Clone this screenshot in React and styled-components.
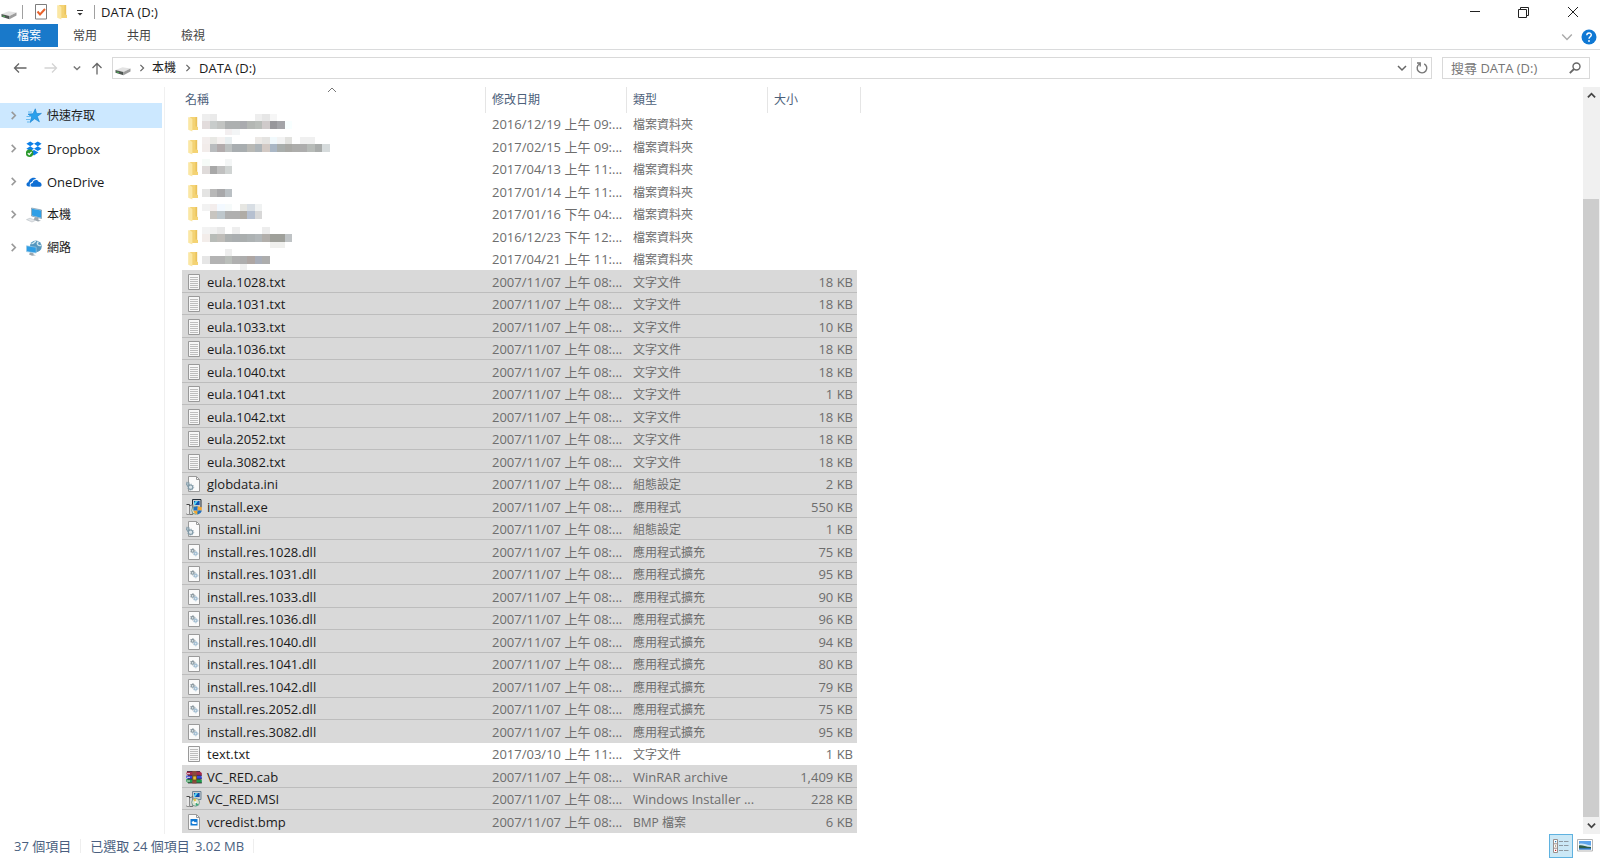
import React from "react";
import styled, { createGlobalStyle, css } from "styled-components";

const GlobalStyle = createGlobalStyle`
  * {
    box-sizing: border-box;
  }
  body {
    margin: 0;
    background: #fff;
    color: #1b1b1b;
    font-family: "Open Sans", "Noto Sans CJK TC", sans-serif;
    font-size: 13px;
    line-height: 20px;
  }
  button, input {
    font: inherit;
    color: inherit;
    background: none;
    border: 0;
    padding: 0;
    margin: 0;
  }
  svg {
    display: block;
    flex: none;
  }
`;

/*
  Window
    TitleBar
    Ribbon
    AddressRow
    Body
      Sidebar
      Files
      ScrollBar
    StatusBar
*/
const Window = styled.div`
  display: flex;
  flex-direction: column;
  min-height: 100vh;
`;

const TitleBar = styled.header`
  display: flex;
  align-items: center;
  height: 24px;
  padding: 0 3px 0 1px;
`;

const QuickButton = styled.button`
  display: flex;
  align-items: center;
  justify-content: center;
  width: ${(p) => p.$width || 20}px;
  height: 24px;
`;

const Separator = styled.span`
  width: 1px;
  height: ${(p) => p.$height || 14}px;
  margin: 0 ${(p) => p.$gap || 6}px;
  background: ${(p) => p.$color || "#a0a0a0"};
`;

const Title = styled.h1`
  margin: 0;
  font-size: 13px;
  font-weight: 400;
  flex: 1;
`;

const CaptionButton = styled.button`
  display: flex;
  align-items: center;
  justify-content: center;
  width: 49px;
  height: 24px;
`;

const Ribbon = styled.div`
  display: flex;
  align-items: flex-start;
  height: 26px;
  border-bottom: 1px solid #dadbdc;
`;

const Tab = styled.button`
  width: 54px;
  height: 24px;
  font-size: 12px;
  color: #444;
  ${(p) =>
    p.$file &&
    css`
      width: 58px;
      height: 23px;
      color: #fff;
      background: #1979ca;
    `}
`;

const RibbonTools = styled.div`
  display: flex;
  align-items: center;
  gap: 8px;
  height: 25px;
  margin-left: auto;
  padding-right: 3px;
`;

const AddressRow = styled.div`
  display: flex;
  align-items: center;
  gap: 3px;
  height: 37px;
  padding: 0 10px 1px 10px;
`;

const NavButton = styled.button`
  display: flex;
  align-items: center;
  justify-content: center;
  width: ${(p) => p.$width || 20}px;
  height: 22px;
`;

const AddressBox = styled.nav`
  display: flex;
  align-items: center;
  flex: 1;
  height: 22px;
  padding-left: 2px;
  border: 1px solid #d9d9d9;
`;

const Crumb = styled.button`
  height: 20px;
  line-height: 18px;
  font-size: ${(p) => (p.$cjk ? 12 : 13)}px;
`;

const Spacer = styled.span`
  flex: 1;
`;

const RefreshButton = styled(NavButton)`
  height: 20px;
  border-left: 1px solid #d9d9d9;
`;

const SearchBox = styled.label`
  display: flex;
  align-items: center;
  width: 148px;
  height: 22px;
  margin-left: 7px;
  padding: 0 8px;
  border: 1px solid #d9d9d9;
`;

const SearchInput = styled.input`
  flex: 1;
  min-width: 0;
  outline: 0;
  &::placeholder {
    color: #767676;
    opacity: 1;
  }
`;

const Body = styled.div`
  display: flex;
  flex: 1;
`;

const Sidebar = styled.nav`
  display: flex;
  flex-direction: column;
  gap: 8px;
  width: 165px;
  padding: 16px 2px 0 0;
  border-right: 1px solid #f0f0f0;
`;

const SideItem = styled.button`
  display: flex;
  align-items: center;
  height: 25px;
  padding-left: 9px;
  font-size: ${(p) => (p.$cjk ? 12 : 13)}px;
  background: ${(p) => (p.$active ? "#cce8ff" : "transparent")};
`;

const SideIcon = styled.span`
  margin: 0 5px 0 8px;
`;

const Files = styled.main`
  flex: 1;
  padding-left: 17px;
`;

const Table = styled.table`
  width: 679px;
  table-layout: fixed;
  border-collapse: separate;
  border-spacing: 0;
`;

const HeadCell = styled.th`
  position: relative;
  width: ${(p) => p.$width}px;
  height: 26px;
  padding: 0 0 0 ${(p) => (p.$first ? 3 : 6)}px;
  border-right: 1px solid #e5e5e5;
  font-size: 12px;
  font-weight: 400;
  color: #4c607a;
  text-align: left;
`;

const SortMark = styled.span`
  position: absolute;
  top: 0;
  left: 145px;
`;

const Cell = styled.td`
  height: inherit;
  padding: ${(p) => (p.$cjk ? 2 : 0)}px 0 0 6px;
  color: #6d6d6d;
  font-size: ${(p) => (p.$cjk ? 12 : 13)}px;
  line-height: 20px;
  white-space: nowrap;
  overflow: hidden;
`;

const NameCell = styled(Cell)`
  padding-left: 4px;
  color: #1b1b1b;
`;

const SizeCell = styled(Cell)`
  padding-right: 4px;
  border-right: 4px solid transparent;
  background-clip: padding-box;
  text-align: right;
`;

const Row = styled.tr`
  height: 22px;
  &:nth-child(even) {
    height: 23px;
  }
  ${(p) =>
    p.$selected &&
    css`
      ${Cell} {
        background-color: #d9d9d9;
        box-shadow: ${p.$last ? "none" : "inset 0 -1px #bdbdbd"};
      }
    `}
`;

const NameInner = styled.div`
  display: flex;
  align-items: center;
  gap: ${(p) => p.$gap || 5}px;
  height: 20px;
`;

const MosaicSvg = styled.svg`
  margin-top: 2px;
`;

const ScrollBar = styled.div`
  display: flex;
  flex-direction: column;
  width: 17px;
  background: #f0f0f0;
`;

const ScrollButton = styled.button`
  display: flex;
  align-items: center;
  justify-content: center;
  height: 17px;
`;

const ScrollGap = styled.div`
  flex: 95;
`;

const ScrollThumb = styled.div`
  flex: 617;
  margin-right: 1px;
  background: #cdcdcd;
`;

const StatusBar = styled.footer`
  display: flex;
  align-items: center;
  height: 24px;
  padding-left: 14px;
  font-size: 13px;
  color: #4a5f80;
`;

const StatusText = styled.span`
  margin-right: ${(p) => p.$gap || 0}px;
`;

const ViewButtons = styled.div`
  display: flex;
  margin-left: auto;
  padding-right: 3px;
`;

const ViewButton = styled.button`
  display: flex;
  align-items: center;
  justify-content: center;
  width: 24px;
  height: 24px;
  border: 1px solid ${(p) => (p.$active ? "#5fb2e0" : "transparent")};
  background: ${(p) => (p.$active ? "#cbe8f6" : "transparent")};
`;

const Svg = ({ w = 16, h = 16, children }) => (
  <svg width={w} height={h} viewBox={`0 0 ${w} ${h}`} fill="none" aria-hidden="true">
    {children}
  </svg>
);

const Chevron = ({ dir = "right", color = "#666", size = 10, width = 1.5 }) => {
  const paths = {
    right: "M3 1 L7 5 L3 9",
    down: "M1 3 L5 7 L9 3",
    up: "M1 7 L5 3 L9 7",
  };
  return (
    <svg width={size} height={size} viewBox="0 0 10 10" fill="none" aria-hidden="true">
      <path d={paths[dir]} stroke={color} strokeWidth={width} />
    </svg>
  );
};

const DriveIcon = () => (
  <Svg>
    <path d="M0.5 10 L7.5 7.2 L15.5 8.6 L8.5 12 Z" fill="#e3e3e3" />
    <path d="M0.5 10 L8.5 12 V15.2 L0.5 12.8 Z" fill="#505753" />
    <path d="M8.5 12 L15.5 8.6 V11.6 L8.5 15.2 Z" fill="#9c9c9c" />
    <path d="M1.5 11.4 L4 12.1 V13.2 L1.5 12.5 Z" fill="#4fae57" />
  </Svg>
);

const CheckDocIcon = () => (
  <Svg>
    <path d="M2.5 0.5 H13.5 V15 H2.5 Z" fill="#fff" stroke="#7d7d7d" />
    <path d="M4.5 7.5 L7 10.5 L12 5" stroke="#e8622c" strokeWidth="2" />
  </Svg>
);

const FolderIcon = ({ w = 16 }) => (
  <svg width={w} height="16" viewBox={`0 0 ${w} 16`} aria-hidden="true">
    <path d="M4 1 H11 V10.5 L12 11 V14 H5 Z" fill="#f4d374" />
    <path d="M9.5 1 H11.2 V10.5 H9.5 Z" fill="#eac25b" />
    <path d="M2.2 1.2 H4 L6.4 3 V15.5 L2.2 13.8 Z" fill="#fbe7a3" />
  </svg>
);

const StarIcon = () => (
  <Svg>
    <path
      d="M9.3 0.8 L10.6 5.6 L15.4 5.4 L11.3 8.5 L13.4 13.8 L8.6 10.8 L4 14.5 L5.6 9.1 L2 6.1 L7 5.7 Z"
      fill="#2aa0ec"
      stroke="#1580cf"
      strokeWidth="0.6"
    />
    <path d="M2 4 H6 M0.5 8.5 H4 M0 11.5 H4 M1 14 H3.5" stroke="#67b9ee" />
  </Svg>
);

const DropboxIcon = () => (
  <Svg>
    <path
      d="M4.2 0.4 L8 2.8 L4.2 5.2 L0.4 2.8 Z M11.8 0.4 L15.6 2.8 L11.8 5.2 L8 2.8 Z M4.2 5.3 L8 7.7 L4.2 10.1 L0.4 7.7 Z M11.8 5.3 L15.6 7.7 L11.8 10.1 L8 7.7 Z M8 9 L12.4 11.6 L8 14.4 L3.6 11.6 Z"
      fill="#0b7fe8"
    />
    <circle cx="3.6" cy="12.2" r="3.7" fill="#2c9a2e" />
    <path d="M1.8 12.2 L3.2 13.6 L5.6 10.8" stroke="#fff" strokeWidth="1.2" />
  </Svg>
);

const OneDriveIcon = () => (
  <Svg>
    <path
      d="M2.6 12.6 C-0.4 12.4 0 8.7 2.4 8.3 C2.8 4.8 7.6 1.8 10.4 5 C8.4 4.9 6.5 6 6 8 C4 8.1 3 10.8 4.4 12.6 Z"
      fill="#0f6fd4"
    />
    <path
      d="M6.3 12.8 C3.6 12.7 4.1 9 6.7 9 C7 5.6 11.8 5 12.7 8 C15.6 7.5 16.8 12.4 14 12.8 Z"
      fill="#0f6fd4"
    />
  </Svg>
);

const ComputerIcon = () => (
  <Svg>
    <path d="M5.5 1 L15.5 3 V11.5 L5.5 9 Z" fill="#d5e1ea" stroke="#7090a8" strokeWidth="0.7" />
    <path d="M6 1.8 L15 3.6 V10.8 L6 8.6 Z" fill="#2f9fe6" />
    <path d="M9 10 L12.5 11 V13 L15 13.8 L12 14.5 L7.5 12.8 Z" fill="#9ba6ae" />
    <path d="M0.5 12.6 L4 11.2 L9.5 13.4 L6 15 Z" fill="#e3e6e9" stroke="#b8bfc4" strokeWidth="0.6" />
  </Svg>
);

const NetworkIcon = () => (
  <Svg>
    <circle cx="9.8" cy="6.4" r="5.9" fill="#5596be" />
    <path d="M5.5 3.6 C8 4 8 1.5 10 1.2 M12.5 1.6 C10 4 12 6 15 5.5" stroke="#cfe6ee" strokeWidth="1.4" />
    <path d="M0.5 5.8 L10.2 7.2 V13 L0.5 11.6 Z" fill="#2e9de4" stroke="#9cc8e4" strokeWidth="0.7" />
    <path d="M4 12.6 L7.5 13.2 V14.6 L10 15.2 L6 15.8 L3 14.4 Z" fill="#9ba6ae" />
  </Svg>
);

const Page = () => (
  <path d="M2.5 0.5 H10.5 L13.5 3.5 V15.5 H2.5 Z" fill="#fafafa" stroke="#9a9a9a" />
);

const TextIcon = () => (
  <Svg>
    <path d="M2.5 0.5 H13.5 V15.5 H2.5 Z" fill="#f7f7f7" stroke="#999" />
    <path d="M4 3.5 H12 M4 5.5 H12 M4 7.5 H12 M4 9.5 H12 M4 11.5 H12 M4 13.5 H12" stroke="#bdbdbd" />
  </Svg>
);

const Cog = ({ x, y, r, color = "#7f98a6" }) => (
  <g stroke={color}>
    <circle cx={x} cy={y} r={r} fill="#dbe5ea" strokeWidth="1.1" />
    <circle cx={x} cy={y} r={r + 0.9} strokeWidth="0.8" strokeDasharray="1.1 1.3" />
  </g>
);

const IniIcon = () => (
  <Svg>
    <Page />
    <path d="M10.5 0.5 V3.5 H13.5" stroke="#9a9a9a" />
    <Cog x={1.8} y={8} r={1.2} />
    <Cog x={4.6} y={11.2} r={2.2} />
  </Svg>
);

const DllIcon = () => (
  <Svg>
    <path d="M2.5 0.5 H13.5 V15.5 H2.5 Z" fill="#fafafa" stroke="#9a9a9a" />
    <Cog x={6.6} y={6.8} r={1.4} color="#8a979e" />
    <Cog x={9.6} y={9.6} r={1.4} color="#9dbad0" />
  </Svg>
);

const InstallerIcon = ({ shield }) => (
  <Svg>
    <path d="M6.5 0.5 H15 V8.5 H6.5 Z" fill="#c8ccd0" stroke={shield ? "#26303a" : "#6f8596"} />
    <path d="M8 2 H13.6 V6 H8 Z" fill="#0c50b0" />
    <path d="M9.5 2 H12 L9 6 H8 V4 Z" fill="#57d3ef" />
    <path d="M0.5 5.5 H3.5 V15 H0.5" stroke="#444" />
    <path d="M1 6 H3 V15 H1 Z" fill="#e8e8e8" />
    <path d="M3.5 7 L6.8 5.5 V15.5 H3.5" fill="#d4d4d4" stroke="#555" strokeWidth="0.8" />
    <circle cx="9.6" cy="11.3" r="3.9" fill="#dfe3d0" stroke="#5f8f85" strokeWidth="0.8" />
    <path d="M9.6 11.3 L7 8.5 L10 7.4 Z" fill="#e4c03e" />
    <path d="M9.6 11.3 L12.6 13.8 L9.8 15.1 Z" fill="#37a878" />
    <circle cx="9.6" cy="11.3" r="1" fill="#fff" />
    {shield && (
      <g>
        <path d="M11.5 7.2 L15.8 8.2 V11.6 H11.5 Z M11.5 11.6 V15.8 C9.2 14.8 7.6 13.4 7.4 11.6 Z" fill="#f2a632" />
        <path d="M11.5 7.2 L7.4 8.2 V11.6 H11.5 Z M11.5 11.6 V15.8 C14 14.8 15.6 13.4 15.8 11.6 Z" fill="#1f6fc0" />
      </g>
    )}
  </Svg>
);

const ArchiveIcon = () => (
  <Svg>
    <path d="M1 2.5 H14 L15.8 4 V6.5 H2 L0.3 5 Z" fill="#a62a4c" />
    <path d="M0.3 6.5 H14 L15.8 7.5 V10 H2 L0.3 9 Z" fill="#3546d8" />
    <path d="M0.3 10 H14 L15.8 11 V14 H2 L0.3 12.5 Z" fill="#1f9a4c" />
    <path d="M1 2.5 H14 M2 6.4 H15.8 M2 10 H15.8 M2 14 H15.8" stroke="#3a1c30" strokeWidth="0.8" />
    <path d="M1 4.7 H4 M1 8.3 H4 M1 12 H4" stroke="#e9d9dd" />
    <path d="M6.3 2 H10.5 V14.4 H6.3 Z" fill="#8a4a3c" />
    <path d="M6.8 7 H10.4 V11 H6.8 Z" fill="#e6c13a" stroke="#5c4518" strokeWidth="0.7" />
  </Svg>
);

const BitmapIcon = () => (
  <Svg>
    <Page />
    <path d="M10.5 0.5 V3.5 H13.5" stroke="#9a9a9a" />
    <path d="M4.5 5 H11.5 V11.5 H4.5 Z" fill="#0f78d4" />
    <path d="M5.5 8 L7.5 7 L9 8.6 L10 7.8 L10.6 8.6 V10 H6.5 Z" fill="#fff" />
  </Svg>
);

const DetailsViewIcon = () => (
  <Svg>
    <path d="M0.5 1.5 H4.5 V14.5 H0.5 Z M0.5 5.8 H4.5 M0.5 10.2 H4.5" fill="#fff" stroke="#9a8f8c" />
    <path d="M2 3 H3.2 V4.2 H2 Z" fill="#2980b9" />
    <path d="M2 7.4 H3.2 V8.6 H2 Z" fill="#7a5a2a" />
    <path d="M2 11.7 H3.2 V12.9 H2 Z" fill="#d02020" />
    <path d="M6 3.5 H10 M11 3.5 H15.5 M6 7.5 H10 M11 7.5 H15.5 M6 12.5 H10 M11 12.5 H15.5" stroke="#8f9aa2" />
  </Svg>
);

const ThumbViewIcon = () => (
  <Svg>
    <path d="M0.5 1.5 H15.5 V13 H0.5 Z" fill="#fff" stroke="#b5b5b5" />
    <path d="M2 3 H14 V11.5 H2 Z" fill="#5ea5ec" />
    <path d="M2 6 C6 4.5 9 7 14 7.5 V9 H2 Z" fill="#cfe6f4" />
    <path d="M2 7.5 C5 6.5 8 9 14 9 V10 H2 Z" fill="#2e5d45" />
    <path d="M2 10 H14 V11.5 H2 Z" fill="#3478b8" />
  </Svg>
);

const icons = {
  folder: <FolderIcon w={12} />,
  txt: <TextIcon />,
  ini: <IniIcon />,
  exe: <InstallerIcon shield />,
  dll: <DllIcon />,
  cab: <ArchiveIcon />,
  msi: <InstallerIcon />,
  bmp: <BitmapIcon />,
};

// pixelated folder names: three lines of cells, "-" is an empty cell
const mosaics = [
  [
    "eeeeee eaeaea - - - - - eeeeee e6e6e6 f6f6f6",
    "e2dcdc c8cccb c2c4c2 adb0b0 adb0b0 aaabaf b4b7b4 b9bdb9 cfcaca 97979b a3a4a8 f8ffff",
    "- - - f3eff0 f3f5f6",
  ],
  [
    "f3eeed e8e8e4 f5f1f0 e8eef0 - - - ece9e6 e4e3e1 f1f9fc f3f3f3 e2e2df - f0f0f0 f0f0f0",
    "f2ecea b9bcbe b2abac bcc0c0 a8adb0 a8adaf b9b9b5 adb4b8 d2c9c4 aab7c5 a9aeac a9a9a5 adadab adadad b7bbb8 a9acab d6dbdc",
    "",
  ],
  ["f6fbf8 - - f4f6f6", "dfdbda a8a8a8 c0c0c0 d0d4d3", ""],
  ["", "e4e4e3 b8b8b8 a8a8aa bac0c4", ""],
  [
    "f2f2f2 f3edec f3f9ff f6fafa - e6e6e2 d8dee4 f0f2f2",
    "- c8c5c0 bec7cc b0b0b0 b0b0b0 b0aca6 b6c0d0 d8d8d8",
    "",
  ],
  [
    "f3f3f3 f0f0f0 e8e8e8 - eeeeee - - - ededed",
    "f3edea b8bcb8 bfbdb9 adb1b1 aaaeb0 aaaeae adb2b3 b2b7b9 b2afab 9fa09a 9fa09a bfc3c5",
    "- - - - - - - - - f0f0ee f0f0ee",
  ],
  [
    "- - - eeeeee",
    "e6e6e6 b3b3b3 b3b3b3 babeba b0b0b0 adadad aea6a3 a8adb8 adadad",
    "- - - - - f0f0f0",
  ],
];

const Mosaic = ({ lines }) => (
  <MosaicSvg width="128" height="22" viewBox="0 0 17 3" preserveAspectRatio="none" shapeRendering="crispEdges" role="img" aria-label="Folder">
    {lines.map((line, y) =>
      line
        .split(" ")
        .map((c, x) =>
          c && c !== "-" ? <rect key={`${x}-${y}`} x={x} y={y} width="1" height="1" fill={`#${c}`} /> : null
        )
    )}
  </MosaicSvg>
);

const folderDates = [
  "2016/12/19 上午 09:...",
  "2017/02/15 上午 09:...",
  "2017/04/13 上午 11:...",
  "2017/01/14 上午 11:...",
  "2017/01/16 下午 04:...",
  "2016/12/23 下午 12:...",
  "2017/04/21 上午 11:...",
];

const types = {
  txt: "文字文件",
  ini: "組態設定",
  exe: "應用程式",
  dll: "應用程式擴充",
  cab: "WinRAR archive",
  msi: "Windows Installer ...",
  bmp: "BMP 檔案",
};

const files = [
  ["eula.1028.txt", "18 KB"],
  ["eula.1031.txt", "18 KB"],
  ["eula.1033.txt", "10 KB"],
  ["eula.1036.txt", "18 KB"],
  ["eula.1040.txt", "18 KB"],
  ["eula.1041.txt", "1 KB"],
  ["eula.1042.txt", "18 KB"],
  ["eula.2052.txt", "18 KB"],
  ["eula.3082.txt", "18 KB"],
  ["globdata.ini", "2 KB"],
  ["install.exe", "550 KB"],
  ["install.ini", "1 KB"],
  ["install.res.1028.dll", "75 KB"],
  ["install.res.1031.dll", "95 KB"],
  ["install.res.1033.dll", "90 KB"],
  ["install.res.1036.dll", "96 KB"],
  ["install.res.1040.dll", "94 KB"],
  ["install.res.1041.dll", "80 KB"],
  ["install.res.1042.dll", "79 KB"],
  ["install.res.2052.dll", "75 KB"],
  ["install.res.3082.dll", "95 KB"],
  ["text.txt", "1 KB"],
  ["VC_RED.cab", "1,409 KB"],
  ["VC_RED.MSI", "228 KB"],
  ["vcredist.bmp", "6 KB"],
];

const places = [
  { name: "快速存取", icon: <StarIcon />, cjk: true, active: true },
  { name: "Dropbox", icon: <DropboxIcon /> },
  { name: "OneDrive", icon: <OneDriveIcon /> },
  { name: "本機", icon: <ComputerIcon />, cjk: true },
  { name: "網路", icon: <NetworkIcon />, cjk: true },
];

const FileTable = () => (
  <Table>
    <thead>
      <tr>
        <HeadCell $width={304} $first aria-sort="ascending">
          名稱
          <SortMark>
            <Svg w={10} h={6}>
              <path d="M1 5 L5 1 L9 5" stroke="#777" />
            </Svg>
          </SortMark>
        </HeadCell>
        <HeadCell $width={141}>修改日期</HeadCell>
        <HeadCell $width={141}>類型</HeadCell>
        <HeadCell $width={93}>大小</HeadCell>
      </tr>
    </thead>
    <tbody>
      {folderDates.map((date, i) => (
        <Row key={date}>
          <NameCell>
            <NameInner $gap={4}>
              {icons.folder}
              <Mosaic lines={mosaics[i]} />
            </NameInner>
          </NameCell>
          <Cell>{date}</Cell>
          <Cell $cjk>檔案資料夾</Cell>
          <SizeCell />
        </Row>
      ))}
      {files.map(([name, size]) => {
        const ext = name.split(".").pop().toLowerCase();
        const selected = name !== "text.txt";
        const last = name === "install.res.3082.dll" || name === "vcredist.bmp";
        return (
          <Row key={name} $selected={selected} $last={last} aria-selected={selected}>
            <NameCell>
              <NameInner>
                {icons[ext]}
                {name}
              </NameInner>
            </NameCell>
            <Cell>{selected ? "2007/11/07 上午 08:..." : "2017/03/10 上午 11:..."}</Cell>
            <Cell $cjk={ext !== "cab" && ext !== "msi"}>{types[ext]}</Cell>
            <SizeCell>{size}</SizeCell>
          </Row>
        );
      })}
    </tbody>
  </Table>
);

const App = () => {
  return (
    <Window>
      <GlobalStyle />
      <TitleBar>
        <DriveIcon />
        <Separator $gap={5} />
        <QuickButton aria-label="Properties" $width={26}>
          <CheckDocIcon />
        </QuickButton>
        <QuickButton aria-label="New folder" $width={18}>
          <FolderIcon />
        </QuickButton>
        <QuickButton aria-label="Customize toolbar" $width={16}>
          <Svg w={8} h={8}>
            <path d="M1 2.5 H7" stroke="#333" />
            <path d="M1.5 5 H6.5 L4 7.5 Z" fill="#333" />
          </Svg>
        </QuickButton>
        <Separator />
        <Title>DATA (D:)</Title>
        <CaptionButton aria-label="Minimize">
          <Svg w={10} h={10}>
            <path d="M0 4.5 H10" stroke="#222" />
          </Svg>
        </CaptionButton>
        <CaptionButton aria-label="Restore">
          <Svg w={11} h={11}>
            <path d="M0.5 2.5 H8.5 V10.5 H0.5 Z M2.5 2.5 V0.5 H10.5 V8.5 H8.5" stroke="#222" />
          </Svg>
        </CaptionButton>
        <CaptionButton aria-label="Close">
          <Svg w={12} h={12}>
            <path d="M1 1 L11 11 M11 1 L1 11" stroke="#222" />
          </Svg>
        </CaptionButton>
      </TitleBar>

      <Ribbon>
        <Tab $file>檔案</Tab>
        <Tab>常用</Tab>
        <Tab>共用</Tab>
        <Tab>檢視</Tab>
        <RibbonTools>
          <QuickButton aria-label="Expand ribbon" $width={12}>
            <Chevron dir="down" color="#aaa" size={12} width={1.2} />
          </QuickButton>
          <QuickButton aria-label="Help" $width={16}>
            <Svg>
              <circle cx="8" cy="8" r="7.5" fill="#0f78d4" />
              <path d="M5.8 6.2 C5.8 3.2 10.4 3.3 10.3 6 C10.2 7.8 8 7.8 8 9.8" stroke="#fff" strokeWidth="1.4" />
              <circle cx="8" cy="12" r="0.9" fill="#fff" />
            </Svg>
          </QuickButton>
        </RibbonTools>
      </Ribbon>

      <AddressRow>
        <NavButton aria-label="Back">
          <Svg w={14} h={12}>
            <path d="M6 1.5 L1.5 6 L6 10.5 M1.5 6 H13.5" stroke="#666" strokeWidth="1.3" />
          </Svg>
        </NavButton>
        <NavButton aria-label="Forward" $width={36}>
          <Svg w={14} h={12}>
            <path d="M8 1.5 L12.5 6 L8 10.5 M12.5 6 H0.5" stroke="#d4d4d4" strokeWidth="1.3" />
          </Svg>
        </NavButton>
        <NavButton aria-label="Recent locations" $width={10}>
          <Chevron dir="down" size={8} width={1.8} color="#777" />
        </NavButton>
        <NavButton aria-label="Up" $width={24}>
          <Svg w={12} h={13}>
            <path d="M1.5 6 L6 1.5 L10.5 6 M6 1.5 V12.5" stroke="#666" strokeWidth="1.3" />
          </Svg>
        </NavButton>
        <AddressBox aria-label="Address">
          <DriveIcon />
          <NavButton aria-label="Show locations" $width={21}>
            <Chevron size={8} />
          </NavButton>
          <Crumb $cjk>本機</Crumb>
          <NavButton aria-label="Show drives" $width={23}>
            <Chevron size={8} />
          </NavButton>
          <Crumb>DATA (D:)</Crumb>
          <Spacer />
          <NavButton aria-label="Previous locations" $width={18}>
            <Chevron dir="down" />
          </NavButton>
          <RefreshButton aria-label="Refresh">
            <Svg w={12} h={12}>
              <path d="M8.2 1.8 A4.8 4.8 0 1 1 3.4 2 M1 1 H4.2 V4.6" stroke="#777" strokeWidth="1.4" />
            </Svg>
          </RefreshButton>
        </AddressBox>
        <SearchBox>
          <SearchInput type="text" placeholder="搜尋 DATA (D:)" aria-label="搜尋 DATA (D:)" />
          <Svg w={12} h={12}>
            <circle cx="7.5" cy="4.5" r="3.5" stroke="#666" strokeWidth="1.4" />
            <path d="M5 7 L0.8 11.2" stroke="#666" strokeWidth="1.8" />
          </Svg>
        </SearchBox>
      </AddressRow>

      <Body>
        <Sidebar>
          {places.map((place) => (
            <SideItem key={place.name} $cjk={place.cjk} $active={place.active}>
              <Chevron color="#999" size={9} width={1.8} />
              <SideIcon>{place.icon}</SideIcon>
              {place.name}
            </SideItem>
          ))}
        </Sidebar>
        <Files>
          <FileTable />
        </Files>
        <ScrollBar>
          <ScrollButton aria-label="Scroll up">
            <Chevron dir="up" color="#444" size={9} width={2} />
          </ScrollButton>
          <ScrollGap />
          <ScrollThumb />
          <ScrollButton aria-label="Scroll down">
            <Chevron dir="down" color="#444" size={9} width={2} />
          </ScrollButton>
        </ScrollBar>
      </Body>

      <StatusBar>
        <StatusText>37 個項目</StatusText>
        <Separator $gap={9} $color="#eee" />
        <StatusText $gap={5}>已選取 24 個項目</StatusText>
        <StatusText>3.02 MB</StatusText>
        <Separator $gap={9} $color="#eee" />
        <ViewButtons>
          <ViewButton aria-label="Details" $active>
            <DetailsViewIcon />
          </ViewButton>
          <ViewButton aria-label="Large icons">
            <ThumbViewIcon />
          </ViewButton>
        </ViewButtons>
      </StatusBar>
    </Window>
  );
};

export default App;
